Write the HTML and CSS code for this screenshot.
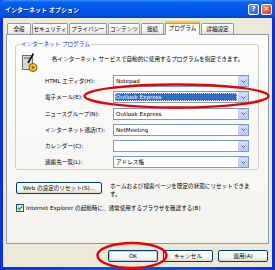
FILE: index.html
```html
<!DOCTYPE html>
<html>
<head>
<meta charset="utf-8">
<link rel="stylesheet" href="styles.css">
</head>
<body>
<div class="window">
  <div class="titlebar">
    <span class="title">インターネット オプション</span>
    <div class="caption">
      <span class="cap help">?</span>
      <span class="cap close">✕</span>
    </div>
  </div>
  <div class="frame">
    <div class="client">
      <div class="tabs">
        <span class="tab w24">全般</span>
        <span class="tab w36">セキュリティ</span>
        <span class="tab w38">プライバシー</span>
        <span class="tab w32">コンテンツ</span>
        <span class="tab w23">接続</span>
        <span class="tab active">プログラム</span>
        <span class="tab w33">詳細設定</span>
      </div>

      <div class="panel">
        <fieldset class="group">
          <legend>インターネット プログラム</legend>
          <div class="intro">
            <svg class="icon" width="16" height="20" viewBox="0 0 16 20">
              <rect x="0.5" y="2.5" width="10" height="14" fill="#d6d6d6" stroke="#6f6f6f"/>
              <rect x="2" y="4" width="7" height="2" fill="#9a9a9a"/>
              <path d="M11.5 0.5 L6 10" stroke="#111" stroke-width="1.6"/>
              <circle cx="11" cy="14.5" r="4" fill="#f3c42c" stroke="#7a5a08"/>
              <circle cx="11" cy="14.5" r="1.4" fill="#8a6a10"/>
            </svg>
            <p>各インターネット サービスで自動的に使用するプログラムを指定できます。</p>
          </div>
          <div class="rows">
            <div class="row">
              <span class="label">HTML エディタ(H):</span>
              <div class="combo"><span class="value">Notepad</span><span class="drop"><svg width="5" height="3" viewBox="0 0 5 3"><path d="M0.5 0.5 L2.5 2.5 L4.5 0.5" fill="none" stroke="#4d6185" stroke-width="1"/></svg></span></div>
            </div>
            <div class="row">
              <span class="label">電子メール(E):</span>
              <div class="combo focus"><span class="value">Outlook Express</span><span class="drop"><svg width="5" height="3" viewBox="0 0 5 3"><path d="M0.5 0.5 L2.5 2.5 L4.5 0.5" fill="none" stroke="#4d6185" stroke-width="1"/></svg></span></div>
            </div>
            <div class="row">
              <span class="label">ニュースグループ(N):</span>
              <div class="combo"><span class="value">Outlook Express</span><span class="drop"><svg width="5" height="3" viewBox="0 0 5 3"><path d="M0.5 0.5 L2.5 2.5 L4.5 0.5" fill="none" stroke="#4d6185" stroke-width="1"/></svg></span></div>
            </div>
            <div class="row">
              <span class="label">インターネット通話(T):</span>
              <div class="combo"><span class="value">NetMeeting</span><span class="drop"><svg width="5" height="3" viewBox="0 0 5 3"><path d="M0.5 0.5 L2.5 2.5 L4.5 0.5" fill="none" stroke="#4d6185" stroke-width="1"/></svg></span></div>
            </div>
            <div class="row">
              <span class="label">カレンダー(C):</span>
              <div class="combo"><span class="value"></span><span class="drop"><svg width="5" height="3" viewBox="0 0 5 3"><path d="M0.5 0.5 L2.5 2.5 L4.5 0.5" fill="none" stroke="#4d6185" stroke-width="1"/></svg></span></div>
            </div>
            <div class="row">
              <span class="label">連絡先一覧(L):</span>
              <div class="combo"><span class="value">アドレス帳</span><span class="drop"><svg width="5" height="3" viewBox="0 0 5 3"><path d="M0.5 0.5 L2.5 2.5 L4.5 0.5" fill="none" stroke="#4d6185" stroke-width="1"/></svg></span></div>
            </div>
          </div>
        </fieldset>

        <div class="reset">
          <button class="btn wide">Web の設定のリセット(S)...</button>
          <p>ホームおよび検索ページを既定の状態にリセットできます。</p>
        </div>

        <label class="check">
          <span class="box"><svg width="6" height="6" viewBox="0 0 6 6"><path d="M0.8 3 L2.3 4.5 L5.2 1.2" fill="none" stroke="#21a121" stroke-width="1.3"/></svg></span>
          <span>Internet Explorer の起動時に、通常使用するブラウザを確認する(B)</span>
        </label>
      </div>

      <div class="footer">
        <button class="btn default">OK</button>
        <button class="btn">キャンセル</button>
        <button class="btn">適用(A)</button>
      </div>
    </div>
  </div>

  <svg class="marks" width="275" height="270" viewBox="0 0 275 270">
    <ellipse cx="176.5" cy="96" rx="92" ry="11.5" fill="none" stroke="#ee0000" stroke-width="2.5"/>
    <ellipse cx="132" cy="255.5" rx="34.5" ry="12.5" fill="none" stroke="#ee0000" stroke-width="2.5"/>
  </svg>
</div>
</body>
</html>
```

FILE: styles.css
```css
body {
  margin: 0;
  font-family: "DejaVu Sans", "Noto Sans CJK JP", sans-serif;
  font-size: 5.6px;
  color: #000;
}

.window {
  position: relative;
  width: 275px;
  height: 270px;
  display: flex;
  flex-direction: column;
  background: #0055e5;
}

/* title bar */
.titlebar {
  height: 18px;
  display: flex;
  align-items: center;
  justify-content: space-between;
  padding: 0 3px 0 5px;
  background: linear-gradient(180deg, #3d8ff8 0%, #0a62f2 12%, #0058ea 45%, #0052e0 80%, #0046c6 100%);
  border-radius: 5px 5px 0 0;
}
.title {
  color: #fff;
  font-weight: bold;
  font-size: 6px;
  text-shadow: 1px 1px 0 #0a1883;
}
.caption {
  display: flex;
  gap: 2px;
}
.cap {
  width: 11px;
  height: 11px;
  box-sizing: border-box;
  border: 1px solid #fff;
  border-radius: 2px;
  color: #fff;
  font-size: 7px;
  font-weight: bold;
  line-height: 9px;
  text-align: center;
}
.help {
  background: linear-gradient(135deg, #5f98f8, #1d5fe0);
}
.close {
  background: linear-gradient(135deg, #f08a6a, #d5401a);
  font-size: 7px;
}

.frame {
  flex: 1;
  display: flex;
  padding: 0 3px 3px;
  background: linear-gradient(90deg, #0831d9, #0055e5 40%, #0055e5 60%, #0831d9);
}
.client {
  flex: 1;
  display: flex;
  flex-direction: column;
  padding: 3px 3px 0;
  background: #ece9d8;
}

/* tabs */
.tabs {
  position: relative;
  z-index: 1;
  height: 13px;
  display: flex;
  align-items: flex-end;
  padding-left: 1px;
}
.tab {
  height: 11px;
  box-sizing: border-box;
  border: 1px solid #919b9c;
  border-bottom: none;
  border-radius: 2px 2px 0 0;
  background: linear-gradient(#ffffff, #f3f3ef 60%, #e3e1d7);
  text-align: center;
  line-height: 10px;
  margin-right: 1px;
}
.w24 { width: 24px; }
.w36 { width: 36px; }
.w38 { width: 38px; }
.w32 { width: 32px; }
.w23 { width: 23px; }
.w33 { width: 33px; }
.tab.active {
  width: 35px;
  height: 14px;
  margin-bottom: -1px;
  border-top: 2px solid #ffc73c;
  background: #fcfcfe;
  line-height: 11px;
  box-shadow: inset 0 1px 0 #e68b2c;
}

/* panel */
.panel {
  height: 210px;
  box-sizing: border-box;
  border: 1px solid #919b9c;
  background: linear-gradient(#fcfcfe, #f4f3ee);
  padding-top: 5px;
}

.group {
  margin: 0 9px 0 8px;
  padding: 0 9px 1px 6px;
  border: 1px solid #d0d0bf;
  border-radius: 3px;
}
.group legend {
  padding: 0 1px;
  margin-left: -2px;
  line-height: 8px;
  color: #0046d5;
}

.intro {
  display: flex;
  gap: 14px;
  margin-top: 5px;
}
.intro p {
  margin: 0;
  padding-top: 2px;
  line-height: 8px;
}

.rows {
  display: flex;
  flex-direction: column;
  gap: 4.3px;
  margin-top: 2px;
}
.row {
  display: flex;
  align-items: center;
  padding-left: 23px;
}
.label {
  width: 68px;
}
.combo {
  width: 136px;
  height: 12px;
  box-sizing: border-box;
  border: 1px solid #7f9db9;
  background: #fff;
  display: flex;
}
.combo .value {
  flex: 1;
  padding-left: 2px;
  line-height: 10px;
}
.combo.focus .value {
  margin: 1px;
  padding-left: 1px;
  line-height: 8px;
  background: #316ac5;
  color: #fff;
  outline: 1px dotted #c8d4ea;
  outline-offset: -1px;
}
.drop {
  width: 10px;
  box-sizing: border-box;
  border: 1px solid #b9cbf5;
  border-radius: 1px;
  background: linear-gradient(#d8e4fd, #b6cbf8);
  display: flex;
  align-items: center;
  justify-content: center;
}

/* reset */
.reset {
  display: flex;
  gap: 8px;
  margin-top: 12px;
  padding: 0 16px 0 9px;
}
.reset p {
  margin: 0;
  line-height: 8px;
  flex: 1;
}

.btn {
  width: 50px;
  height: 12px;
  box-sizing: border-box;
  padding: 0;
  border: 1px solid #003c74;
  border-radius: 2px;
  background: linear-gradient(#ffffff, #f4f4f0 70%, #dcd8cc);
  font-family: inherit;
  font-size: 5.6px;
  color: #000;
}
.btn.wide {
  width: 86px;
  flex: none;
}
.btn.default {
  box-shadow: inset 0 0 0 1px #b9d1f7;
}

.check {
  display: flex;
  align-items: center;
  gap: 2px;
  margin-top: 6px;
  padding-left: 9px;
}
.box {
  width: 8px;
  height: 8px;
  box-sizing: border-box;
  border: 1px solid #1c5180;
  background: linear-gradient(135deg, #dcdcd7, #fff);
  display: flex;
  align-items: center;
  justify-content: center;
}

/* footer */
.footer {
  display: flex;
  justify-content: flex-end;
  gap: 5px;
  padding: 6px 1px 0 0;
}

.marks {
  position: absolute;
  left: 0;
  top: 0;
  pointer-events: none;
}
```
